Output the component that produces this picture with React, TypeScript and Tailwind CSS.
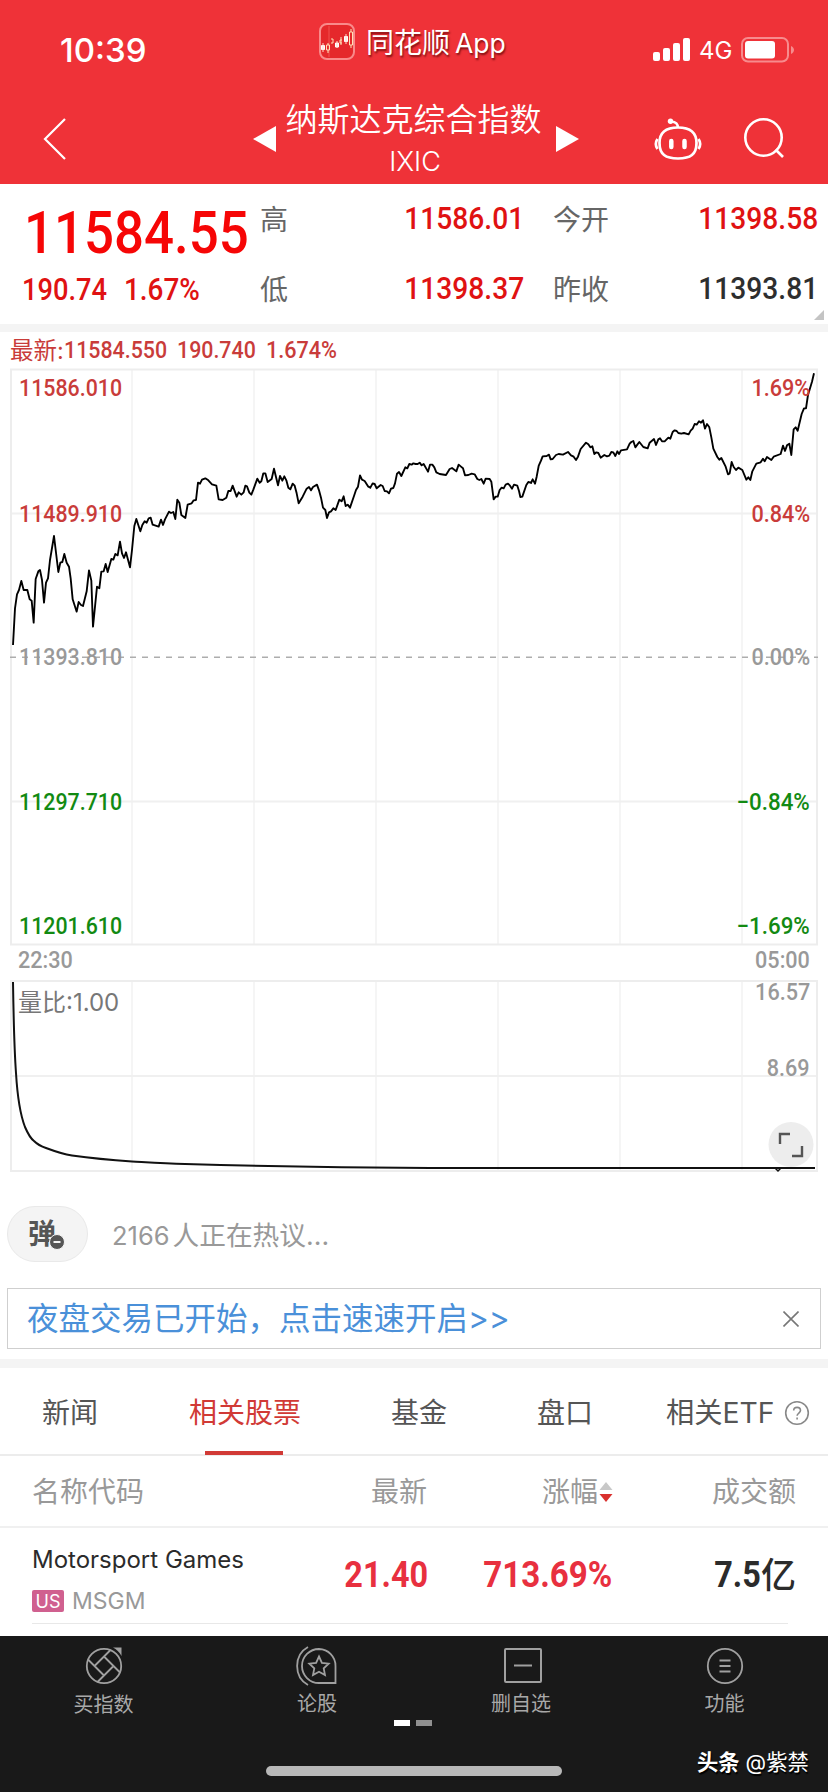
import { clsx } from "clsx";
import type { ReactNode } from "react";

const PRICE_POINTS =
  "39,855 45,745 51,703 57,690 64,663 71,690 82,690 89,718 95,722 101,788 107,657 115,634 120,630 126,660 132,728 138,668 144,655 150,600 162,528 175,636 181,608 187,606 193,582 200,608 207,620 212,655 218,718 230,755 236,726 243,735 249,738 260,694 267,631 274,662 279,800 291,680 298,685 304,635 311,634 317,612 323,636 334,597 340,599 346,582 353,586 360,545 366,580 372,594 378,577 390,622 396,570 403,498 409,477 421,514 427,495 434,484 440,488 446,475 452,473 458,494 476,500 483,479 489,495 495,478 507,455 513,459 520,456 526,477 532,419 538,428 544,465 556,474 563,434 575,430 581,421 588,420 594,368 600,371 606,359 616,355 625,361 636,373 649,377 656,418 668,420 679,413 685,393 692,393 698,377 710,410 716,397 724,404 731,397 736,377 741,379 748,398 754,404 760,389 772,356 779,368 784,364 790,340 796,340 803,366 815,357 822,326 " +
  "834,376 840,348 847,362 853,349 859,361 865,383 871,388 878,371 884,377 890,400 896,430 908,410 920,386 927,381 933,391 939,381 951,374 957,391 963,413 969,443 976,450 981,474 987,457 993,454 1000,445 1007,450 1018,419 1025,424 1031,409 1037,438 1043,434 1050,443 1062,408 1068,390 1074,380 1080,346 1086,359 1094,363 1104,379 1111,383 1118,370 1124,372 1130,385 1142,375 1148,378 1154,393 1161,394 1167,400 1173,386 1180,384 1185,370 1191,341 1197,336 1204,348 1216,322 1222,325 1228,312 1235,314 1240,310 1247,312 1253,312 1259,308 1265,316 1271,312 1284,335 1290,314 1297,314 1303,322 1309,337 1319,342 1338,345 1349,327 1356,324 1369,334 1376,314 1383,320 1389,325 1395,346 1405,345 1415,341 1424,343 1432,357 1438,360 1444,357 1451,371 1457,356 1469,357 1474,365 1481,418 1487,410 1493,410 1499,390 1505,383 1511,385 1517,374 1524,371 1530,377 1536,386 1542,374 1552,377 1557,393 1561,411 1567,410 1579,375 1585,366 1593,369 1598,358 1605,371 1610,350 1616,318 1623,302 1628,289 1640,288 1647,284 " +
  "1652,298 1658,297 1668,285 1676,282 1689,284 1704,276 1713,286 1721,290 1728,300 1734,290 1742,267 1758,248 1765,253 1771,262 1777,259 1783,282 1789,277 1795,279 1802,293 1813,285 1821,289 1828,287 1834,276 1840,277 1846,288 1852,274 1857,282 1863,271 1881,268 1889,251 1894,246 1900,243 1906,262 1912,254 1918,246 1930,261 1943,265 1949,248 1962,237 1968,255 1975,238 1980,235 1986,244 1994,244 2005,233 2011,236 2018,216 2024,211 2030,213 2035,219 2044,221 2052,219 2066,223 2072,212 2078,206 2084,192 2090,194 2097,184 2103,188 2109,181 2115,206 2121,192 2128,202 2134,232 2140,266 2152,291 2158,299 2164,294 2177,320 2184,343 2189,340 2195,306 2201,321 2208,330 2215,323 2227,330 2239,359 2245,352 2251,360 2257,334 2269,311 2282,307 2289,296 2294,304 2301,291 2314,300 2321,290 2342,282 2349,257 2355,273 2361,256 2368,251 2374,285 2381,208 2387,202 2393,212 2405,162 2412,145 2418,145 2424,105 2436,65 2442,40";

const GRID_X = [132, 254, 376, 498, 620, 742];

const priceScale = [
  { price: "11586.010", pct: "1.69%", color: "text-[#c93c3a]" },
  { price: "11489.910", pct: "0.84%", color: "text-[#c93c3a]" },
  { price: "11393.810", pct: "0.00%", color: "text-[#999999]" },
  { price: "11297.710", pct: "−0.84%", color: "text-[#128a12]" },
  { price: "11201.610", pct: "−1.69%", color: "text-[#128a12]" },
];

/* Tabular figures, squeezed towards a DIN look */
function Num({ children, right, className }: { children: ReactNode; right?: boolean; className?: string }) {
  return (
    <span
      className={clsx(
        "inline-block whitespace-nowrap font-['Roboto','Noto_Sans_CJK_SC',sans-serif]",
        right ? "origin-right" : "origin-left",
        className,
      )}
    >
      {children}
    </span>
  );
}

function StatusBar() {
  return (
    <div className="flex h-[88px] text-white">
      <div className="w-[319px] pl-[60px] pt-[30px] text-[33px] font-medium leading-10">10:39</div>
      <div className="flex w-[334px] gap-[11px] pt-[23px]">
        <svg width="36" height="37" viewBox="0 0 36 37" fill="none">
          <rect x="1" y="1" width="34" height="35" rx="7" fill="#e5282b" stroke="#f98a8a" strokeWidth="2" />
          <path d="M10 3v31" stroke="#f05050" />
          <path d="M2.500 22.500h3v4h-3zM16.500 20h3v4h-3zM25.500 13.500h3v5h-3z" fill="#fff" stroke="#fff" />
          <path d="M4 20v9M18 18v7M27 11v10" stroke="#ffd9c8" />
          <path d="M7.500 22h3v5h-3zM9 20v2m0 5v3M12 16h2v4h-2m11-3h-2v3h2M22 14v8M30.500 9h3v13h-3zM32 6v3m0 13v3" stroke="#ffe2b8" />
        </svg>
        <span className="flex gap-[5px] text-[28px] leading-[41px] [text-shadow:1px_2px_2px_rgba(80,0,0,0.7)]">
          <span>同花顺</span>
          <span className="text-[26.500px]">App</span>
        </span>
      </div>
      <div className="flex pt-[37px]">
        <svg width="38" height="25" viewBox="0 0 38 25" fill="#fff">
          <rect y="15" width="7" height="9" rx="2" />
          <rect x="10" y="11" width="7" height="13" rx="2" />
          <rect x="20" y="6" width="7" height="18" rx="2" />
          <rect x="30" y="1" width="7" height="23" rx="2" />
        </svg>
        <span className="w-[50px] pl-[8px] text-[24px] leading-7">4G</span>
        <svg width="55" height="26" viewBox="0 0 55 26">
          <rect x="1" y="1" width="46" height="23.500" rx="6" fill="none" stroke="#f78b8d" strokeWidth="2" />
          <rect x="4" y="4" width="30" height="17.500" rx="3" fill="#fff" />
          <path d="M50 9c4 2 4 6 0 8z" fill="#f78b8d" />
        </svg>
      </div>
    </div>
  );
}

function TitleBar() {
  return (
    <div className="flex h-24 text-white">
      <svg className="mt-[30px] ml-[43px]" width="24" height="42" viewBox="0 0 24 42" fill="none" stroke="#fff" strokeWidth="2.200">
        <path d="M22 1 2 21l20 20" />
      </svg>
      <svg className="mt-[38px] ml-[186px]" width="23" height="26" viewBox="0 0 23 26" fill="#fff">
        <path d="M23 0v26L0 13z" />
      </svg>
      <div className="flex w-[280px] flex-col items-center">
        <div className="h-[53px] pt-[11px] pr-[5px] text-[32px] font-[350] leading-[42px]">纳斯达克综合指数</div>
        <div className="pr-[2px] text-[27px] font-[350] leading-[42px]">IXIC</div>
      </div>
      <svg className="mt-[38px]" width="23" height="26" viewBox="0 0 23 26" fill="#fff">
        <path d="M0 0v26l23-13z" />
      </svg>
      <svg className="mt-[29px] ml-[75px]" width="48" height="44" viewBox="0 0 48 44" fill="none" stroke="#fff" strokeWidth="2.700">
        <path d="M24 10.500c-12 0-18.500 5-18.500 15.500 0 11.500 6 15.500 18.500 15.500s18.500-4 18.500-15.500c0-10.500-6.500-15.500-18.500-15.500z" />
        <path d="M24 11c0-4.500-2-6-7-6.500" />
        <circle cx="16.500" cy="4.300" r="2.700" fill="#fff" stroke="none" />
        <path d="M3.500 22c-2 3-2 7 0 10M44.500 22c2 3 2 7 0 10" />
        <path d="M17.300 24v6M30.500 24v6" strokeWidth="4.500" strokeLinecap="round" />
      </svg>
      <svg className="mt-[29px] ml-[41px]" width="44" height="44" viewBox="0 0 44 44" fill="none" stroke="#fff" strokeWidth="2.600">
        <circle cx="20.500" cy="20.500" r="18.200" />
        <path d="m32.500 32.500 7.500 7.500" />
      </svg>
    </div>
  );
}

function Quote() {
  return (
    <section className="relative grid h-[140px] grid-cols-[260px_264px_294px] text-[28px] text-[#666666]">
      <div className="pt-[12px] pl-[24px] text-[#f60606]">
        <div className="h-[72px]">
          <Num className="scale-x-[0.88] text-[60px] font-medium leading-[74px]">11584.55</Num>
        </div>
        <div className="-ml-[2px] flex h-[40px] text-[#e01212]">
          <Num className="w-[102px] scale-x-[0.88] text-[31px] font-medium leading-[43px]">190.74</Num>
          <Num className="scale-x-[0.9] text-[31px] font-medium leading-[43px]">1.67%</Num>
        </div>
      </div>
      <div>
        <div className="flex h-[68px] items-center justify-between">
          <span className="pt-[3px]">高</span>
          <Num right className="scale-x-[0.88] text-[32px] font-medium text-[#e01212]">11586.01</Num>
        </div>
        <div className="flex h-[72px] items-center justify-between">
          <span className="pt-[3px]">低</span>
          <Num right className="scale-x-[0.88] text-[32px] font-medium text-[#e01212]">11398.37</Num>
        </div>
      </div>
      <div className="pl-[29px]">
        <div className="flex h-[68px] items-center justify-between">
          <span className="pt-[3px]">今开</span>
          <Num right className="scale-x-[0.88] text-[32px] font-medium text-[#e01212]">11398.58</Num>
        </div>
        <div className="flex h-[72px] items-center justify-between">
          <span className="pt-[3px]">昨收</span>
          <Num right className="scale-x-[0.88] text-[32px] font-medium text-[#2e2e2e]">11393.81</Num>
        </div>
      </div>
      <svg className="absolute right-[4px] bottom-[4px]" width="10" height="10" viewBox="0 0 10 10" fill="#c4c4c4">
        <path d="M10 0v10H0z" />
      </svg>
    </section>
  );
}

function PriceChart() {
  return (
    <section className="relative h-[648px] text-[24px]">
      <svg className="absolute inset-0" width="828" height="648" viewBox="0 332 828 648" fill="none">
        {GRID_X.map((x) => (
          <path key={x} d={`M${x} 370V944`} stroke="#f5f5f5" strokeWidth="2" />
        ))}
        <path d="M11 513.500H817M11 801.500H817" stroke="#f0f0f0" strokeWidth="2" />
        <rect x="11" y="369.500" width="806" height="575" stroke="#ededed" strokeWidth="2" />
        <path d="M10 657.300H818" stroke="#adadad" strokeWidth="1.400" strokeDasharray="6 6" />
        <g transform="translate(0 360) scale(0.33333)">
          <polyline points={PRICE_POINTS} stroke="#000" strokeWidth="5.600" strokeLinejoin="round" />
        </g>
      </svg>
      <div className="relative flex h-[38px] pl-[10px] text-[#c93c3a]">
        <span className="w-[54px] text-[23.500px] leading-[37px]">最新:</span>
        <Num className="w-[113px] scale-x-[0.89] font-medium leading-[36px]">11584.550</Num>
        <Num className="w-[89px] scale-x-[0.89] font-medium leading-[36px]">190.740</Num>
        <Num className="scale-x-[0.9] font-medium leading-[36px]">1.674%</Num>
      </div>
      <div className="relative flex h-[574px] flex-col justify-between pt-[2px] pr-[18px] pb-[2px] pl-[19px]">
        {priceScale.map(({ price, pct, color }, i) => (
          <div
            key={price}
            className={clsx(
              "flex h-[32px] items-center justify-between",
              color,
              i === 1 && "-translate-y-[9px]",
              i === 3 && "translate-y-[10px]",
            )}
          >
            <Num className="scale-x-[0.89] font-medium">{price}</Num>
            <Num right className={clsx("font-medium", i > 2 ? "scale-x-[0.93]" : "scale-x-[0.9]")}>
              {pct}
            </Num>
          </div>
        ))}
      </div>
      <div className="relative flex h-[32px] items-center justify-between px-[18px] text-[#999999]">
        <Num className="scale-x-[0.9] font-medium">22:30</Num>
        <Num right className="scale-x-[0.9] font-medium">05:00</Num>
      </div>
    </section>
  );
}

function VolumeChart() {
  return (
    <section className="relative h-[206px] text-[24px] text-[#999999]">
      <svg className="absolute inset-0" width="828" height="206" viewBox="0 980 828 206" fill="none">
        {GRID_X.map((x) => (
          <path key={x} d={`M${x} 981V1171`} stroke="#f5f5f5" strokeWidth="2" />
        ))}
        <path d="M11 1076H817" stroke="#f0f0f0" strokeWidth="2" />
        <rect x="11" y="981" width="806" height="190" stroke="#ededed" strokeWidth="2" />
        <circle cx="791" cy="1144.500" r="22.500" fill="#ededed" />
        <path
          d="M13 982C13.500 1015 14 1045 16 1073C17.500 1098 20 1114 25 1127C28 1134 30 1138 34 1141C37 1144 40 1146 46 1148C54 1151 62 1154 72 1155.500C90 1158 110 1160 132 1161.500C150 1162.500 165 1163.500 185 1164C240 1165.500 340 1167.500 430 1168H815"
          stroke="#111"
          strokeWidth="2"
        />
        <path d="M775 1168l3 3 3-3" stroke="#111" strokeWidth="1.500" />
        <path d="M780 1144v-10h10M802 1146v10h-10" stroke="#555" strokeWidth="2.400" />
      </svg>
      <div className="relative flex justify-between pr-[18px] pl-[18px]">
        <span className="pt-[6px] text-[24px] leading-[33px] text-[#777777]">量比:1.00</span>
        <div className="flex flex-col items-end">
          <Num right className="h-[76px] scale-x-[0.9] font-medium leading-[24px]">16.57</Num>
          <Num right className="scale-x-[0.9] font-medium leading-[24px]">8.69</Num>
        </div>
      </div>
    </section>
  );
}

function Discussion() {
  return (
    <section className="px-[7px] pt-[20px]">
      <div className="flex h-[56px] items-center">
        <div className="relative flex h-[56px] w-[81px] rounded-[28px] border border-[#e9e9e9] bg-[#f4f4f4] pl-[20px]">
          <span className="text-[28px] font-bold leading-[54px] text-[#555555]">弹</span>
          <svg className="absolute top-[27px] left-[41px]" width="16" height="16" viewBox="0 0 16 16">
            <circle cx="8" cy="8" r="7.500" fill="#555" stroke="#f4f4f4" />
            <path d="M4.500 8h7" stroke="#f4f4f4" strokeWidth="2" />
          </svg>
        </div>
        <span className="flex items-baseline gap-[3px] pt-[3px] pl-[24px] text-[#999999]">
          <span className="text-[25.500px]">2166</span>
          <span className="text-[26.700px]">人正在热议...</span>
        </span>
      </div>
      <div className="mt-[26px] flex h-[61px] items-center justify-between border border-[#cfcfcf] pr-[21px] pl-[19px] text-[31.500px] text-[#4a90d9]">
        <span className="pt-[1px]">夜盘交易已开始，点击速速开启&gt;&gt;</span>
        <svg width="16" height="16" viewBox="0 0 16 16" stroke="#777" strokeWidth="1.600">
          <path d="m.5.5 15 15M15.500.500l-15 15" />
        </svg>
      </div>
    </section>
  );
}

function Tabs() {
  return (
    <nav className="relative flex h-[88px] border-b-2 border-[#ececec] pt-[23px] text-[28px] leading-[44px] text-[#555555]">
      <span className="w-[147px] pl-[42px]">新闻</span>
      <span className="w-[202px] pl-[42px] text-[#d13a36]">相关股票</span>
      <span className="w-[188px] pl-[42px]">基金</span>
      <span className="w-[129px]">盘口</span>
      <span className="whitespace-nowrap text-[28.300px]">相关ETF</span>
      <svg className="mt-[9px] ml-[9px] shrink-0" width="26" height="26" viewBox="0 0 26 26" fill="none" stroke="#888" strokeWidth="1.600">
        <circle cx="13" cy="13" r="11.300" />
        <path d="M9.700 10.600c0-4.300 6.800-4.300 6.800 0 0 2.400-3.400 2.600-3.400 5.200M13.100 17.600v2" />
      </svg>
      <i className="absolute -bottom-[1px] left-[205px] h-[4px] w-[78px] bg-[#d13a36]" />
    </nav>
  );
}

function StockTable() {
  return (
    <section>
      <div className="flex h-[72px] border-b-2 border-[#f0f0f0] text-[28px] leading-[73px] text-[#999999]">
        <span className="w-[371px] pl-[32px]">名称代码</span>
        <span className="w-[171px]">最新</span>
        <span>涨幅</span>
        <svg className="mt-[25px] ml-[1px]" width="14" height="22" viewBox="0 0 14 22">
          <path d="M7 1l6.500 8H.5z" fill="#c8c8c8" />
          <path d="M7 21l6.500-8H.5z" fill="#d9302e" />
        </svg>
        <span className="ml-auto pr-[32px]">成交额</span>
      </div>
      <div className="flex h-[95px] pl-[32px]">
        <div className="w-[240px] pt-[16px]">
          <div className="whitespace-nowrap text-[24px] leading-[32px] text-[#2b2b2b]">Motorsport Games</div>
          <div className="mt-[9px] flex items-center gap-[8px]">
            <span className="h-[22px] w-[32px] rounded-[2px] bg-[#d0608f] text-center text-[18px] leading-[23px] text-white">US</span>
            <span className="text-[23px] leading-[32px] text-[#999999]">MSGM</span>
          </div>
        </div>
        <div className="flex w-[156px] justify-end pt-[26px] text-[#e8303f]">
          <Num right className="scale-x-[0.9] text-[36px] font-bold leading-[43px]">21.40</Num>
        </div>
        <div className="flex w-[184px] justify-end pt-[26px] text-[#e8303f]">
          <Num right className="scale-x-[0.92] text-[36px] font-bold leading-[43px]">713.69%</Num>
        </div>
        <div className="flex w-[184px] justify-end pt-[26px] text-[#2b2b2b]">
          <Num right className="scale-x-[0.9] text-[36px] font-bold leading-[43px]">7.5</Num>
          <span className="text-[35px] font-medium leading-[42px]">亿</span>
        </div>
      </div>
      <div className="mr-[40px] ml-[32px] h-[1px] bg-[#e8e8e8]" />
    </section>
  );
}

function BottomBar() {
  return (
    <footer className="h-[156px] bg-[#191919] text-[20px] leading-[26px] text-[#a8a8a8]">
      <div className="flex h-[84px] pt-[10px]">
        <div className="flex w-[207px] flex-col items-center">
          <svg width="40" height="40" viewBox="0 0 40 40" fill="none" stroke="#a0a0a0" strokeWidth="1.800">
            <circle cx="20" cy="20" r="17.200" />
            <path d="M10.500 20 26.500 4M20 10.500l16 16M29.500 20l-16 16M20 29.500l-16-16" />
            <path d="M29 1.500h8.500V10c-2-4-5-6.500-8.500-8.500z" fill="#a0a0a0" stroke="none" />
          </svg>
          <span className="mt-[6px]">买指数</span>
        </div>
        <div className="flex w-[220px] flex-col items-center">
          <svg className="-ml-[3px]" width="42" height="40" viewBox="0 0 42 40" fill="none" stroke="#a0a0a0" strokeWidth="1.800">
            <path d="M13 1C-1.500 9-1.500 31 13 39" />
            <path d="M24 3a17 17 0 1 0 0 34H40.500V20A16.800 16.800 0 0 0 24 3z" />
            <path d="m24 10.500 2.900 6.300 6.800.8-5 4.700 1.300 6.700-6-3.300-6 3.300 1.300-6.700-5-4.700 6.800-.8z" />
          </svg>
          <span className="mt-[5px]">论股</span>
        </div>
        <div className="flex w-[188px] flex-col items-center">
          <svg className="ml-[4px]" width="40" height="40" viewBox="0 0 40 40" fill="none" stroke="#a0a0a0" strokeWidth="2">
            <rect x="2" y="3" width="36" height="33" rx="1" />
            <path d="M11 19.500h18" />
          </svg>
          <span className="mt-[5px]">删自选</span>
        </div>
        <div className="flex w-[213px] flex-col items-center pl-[6px]">
          <svg width="40" height="40" viewBox="0 0 40 40" fill="none" stroke="#a0a0a0" strokeWidth="1.800">
            <circle cx="20" cy="20" r="17.200" />
            <path d="M14.500 14.500h11M14.500 20h11M14.500 25.500h11" />
          </svg>
          <span className="mt-[5px]">功能</span>
        </div>
      </div>
      <div className="flex h-[6px] justify-center gap-[6px] pr-[2px]">
        <i className="w-4 bg-white" />
        <i className="w-4 bg-[#909090]" />
      </div>
      <div className="flex h-[66px]">
        <div className="mt-[40px] ml-[266px] h-[10px] w-[296px] rounded-full bg-[#b8b8b8]" />
        <div className="ml-[135px] flex gap-[6px] pt-[23px] text-[21.300px] text-white [text-shadow:1px_2px_1px_#000]">
          <span className="font-bold">头条</span>
          <span className="whitespace-nowrap">@紫禁</span>
        </div>
      </div>
    </footer>
  );
}

export default function App() {
  return (
    <div className="flex h-[1792px] w-[828px] flex-col overflow-hidden bg-white font-['Inter','Noto_Sans_CJK_SC',sans-serif]">
      <header className="h-[184px] bg-[#ef3238]">
        <StatusBar />
        <TitleBar />
      </header>
      <Quote />
      <div className="h-[8px] bg-[#f4f4f4]" />
      <PriceChart />
      <VolumeChart />
      <div className="h-[173px]">
        <Discussion />
      </div>
      <div className="h-[9px] bg-[#f4f4f4]" />
      <Tabs />
      <div className="h-[180px]">
        <StockTable />
      </div>
      <BottomBar />
    </div>
  );
}
